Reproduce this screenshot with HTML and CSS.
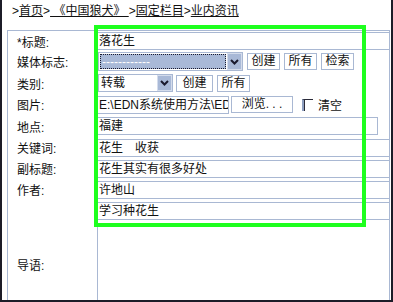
FILE: index.html
```html
<!DOCTYPE html>
<html lang="zh">
<head>
<meta charset="utf-8">
<title>业内资讯</title>
<link rel="stylesheet" href="styles.css">
</head>
<body>
<div class="frame">
  <div class="crumb">&gt;<a>首页</a>&gt;<a> 《中国狼犬》 </a>&gt;<a>固定栏目</a>&gt;<a>业内资讯</a></div>
  <div class="form">
    <div class="lbl">*标题:</div>
    <div class="val"><span class="field">落花生</span></div>

    <div class="lbl">媒体标志:</div>
    <div class="val">
      <span class="select media"><span class="sel-text"><span class="dash">------------</span></span><span class="arrow"><svg width="9" height="6" viewBox="0 0 9 6"><path d="M1 1 L4.5 4.5 L8 1" fill="none" stroke="#1a1a2e" stroke-width="2"/></svg></span></span>
      <span class="btn">创建</span><span class="btn">所有</span><span class="btn">检索</span>
    </div>

    <div class="lbl">类别:</div>
    <div class="val">
      <span class="select kind"><span class="sel-plain">转载</span><span class="arrow"><svg width="9" height="6" viewBox="0 0 9 6"><path d="M1 1 L4.5 4.5 L8 1" fill="none" stroke="#1a1a2e" stroke-width="2"/></svg></span></span>
      <span class="btn wide-btn">创建</span><span class="btn">所有</span>
    </div>

    <div class="lbl">图片:</div>
    <div class="val">
      <span class="field file">E:\EDN系统使用方法\ED</span><span class="btn browse">浏览. . .</span><span class="check"></span><span class="clear">清空</span>
    </div>

    <div class="lbl">地点:</div>
    <div class="val"><span class="field place">福建</span></div>

    <div class="lbl">关键词:</div>
    <div class="val"><span class="field">花生　收获</span></div>

    <div class="lbl">副标题:</div>
    <div class="val"><span class="field">花生其实有很多好处</span></div>

    <div class="lbl">作者:</div>
    <div class="val"><span class="field">许地山</span></div>

    <div class="lbl"></div>
    <div class="val"><span class="field">学习种花生</span></div>

    <div class="lbl">导语:</div>
    <div class="val"></div>
  </div>
  <div class="highlight"></div>
</div>
</body>
</html>
```
FILE: styles.css
```css
html, body {
  margin: 0;
  padding: 0;
  background: #ffffff;
}

.frame {
  position: relative;
  width: 393px;
  height: 302px;
  box-sizing: border-box;
  border: 2px solid #1c1c28;
  border-top: 0;
  overflow: hidden;
  background: #ffffff;
  font: 12px "Liberation Sans", "Noto Sans CJK SC", sans-serif;
  color: #111111;
}

.crumb {
  height: 30px;
  box-sizing: border-box;
  padding: 4px 0 0 10px;
  line-height: 14px;
  white-space: nowrap;
}

.crumb a {
  color: #111111;
  text-decoration: underline;
  white-space: pre;
}

.form {
  margin-left: 5px;
  width: 383px;
  box-sizing: border-box;
  border: 1px solid #a9b8d3;
  border-bottom: 0;
  display: grid;
  grid-template-columns: 90px 1fr;
  grid-template-rows: 20px 21px 22px 21px 22px 21px 21px 21px 21px 86px;
}

.lbl {
  border-right: 1px solid #a9b8d3;
  display: flex;
  align-items: center;
  padding-left: 9px;
  white-space: nowrap;
}

.val {
  display: flex;
  align-items: center;
  gap: 4px;
  overflow: hidden;
  min-width: 0;
  white-space: nowrap;
}

.field {
  flex: none;
  box-sizing: border-box;
  height: 18px;
  width: 320px;
  border: 1px solid #a9b8d3;
  border-left: 0;
  padding-left: 1px;
  line-height: 16px;
  overflow: hidden;
  white-space: nowrap;
}

.field.place {
  width: 280px;
}

.field.file {
  width: 131px;
  border-left: 0;
}

.select {
  flex: none;
  box-sizing: border-box;
  display: flex;
  border: 1px solid #a9b8d3;
  background: #ffffff;
}

.select.media {
  width: 145px;
  height: 19px;
}

.select.kind {
  width: 75px;
  height: 18px;
}

.sel-text {
  flex: 1;
  margin: 1px;
  background: #a9b9d7;
  border: 1px dotted #1a1a2e;
  display: flex;
  align-items: center;
  padding-left: 1px;
  overflow: hidden;
}

.dash {
  color: #ffffff;
  line-height: 12px;
}

.sel-plain {
  flex: 1;
  padding-left: 2px;
  line-height: 16px;
}

.arrow {
  flex: none;
  width: 15px;
  box-sizing: border-box;
  background: #a9b9d7;
  border: 1px solid #d4dcec;
  display: flex;
  align-items: center;
  justify-content: center;
}

.btn {
  flex: none;
  box-sizing: border-box;
  width: 33px;
  height: 17px;
  border: 1px solid #a9b8d3;
  background: #ffffff;
  text-align: center;
  line-height: 15px;
}

.btn.wide-btn {
  width: 37px;
  margin-left: -1px;
}

.btn.browse {
  width: 62px;
  margin-left: -2px;
}

.check {
  flex: none;
  box-sizing: border-box;
  width: 11px;
  height: 12px;
  margin-left: 5px;
  border-top: 1px solid #2a2a38;
  border-left: 2px solid #8e9fbf;
  box-shadow: inset 1px 0 0 #2a2a38;
}

.clear {
  flex: none;
  margin-left: 1px;
}

.highlight {
  position: absolute;
  left: 92px;
  top: 25px;
  width: 272px;
  height: 202px;
  box-sizing: border-box;
  border: 4px solid #1eff1e;
  pointer-events: none;
}
```
